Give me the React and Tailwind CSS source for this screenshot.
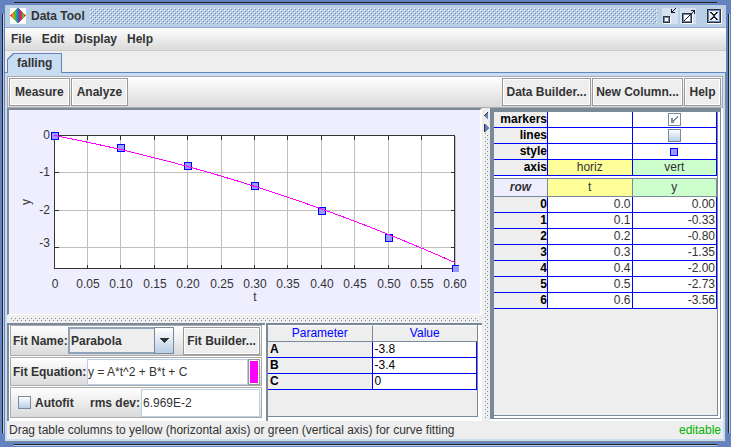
import { useState } from 'react';

const POINTS = [
  [0.0, 0.0],
  [0.1, -0.33],
  [0.2, -0.8],
  [0.3, -1.35],
  [0.4, -2.0],
  [0.5, -2.73],
  [0.6, -3.56],
];

const PARAMS = [
  ['A', '-3.8'],
  ['B', '-3.4'],
  ['C', '0'],
];

const X_TICKS = ['0', '0.05', '0.10', '0.15', '0.20', '0.25', '0.30', '0.35', '0.40', '0.45', '0.50', '0.55', '0.60'];
const Y_TICKS = [
  { label: '0', line: 25, base: 29 },
  { label: '-1', line: 62, base: 66 },
  { label: '-2', line: 100, base: 104 },
  { label: '-3', line: 137, base: 137 },
];

const tickX = (i) => Math.floor(45 + i * 33.4);
const plotX = (t) => 45 + (t / 0.6) * 401;
const plotY = (y) => 25.5 - y * 37.3;

function Bumps({ id, dark, className }) {
  return (
    <svg className={className} width="100%" height="100%" shapeRendering="crispEdges" aria-hidden="true">
      <defs>
        <pattern id={id} width="4" height="4" patternUnits="userSpaceOnUse">
          <path d="M0 0h1v1h-1zM2 2h1v1h-1z" fill="#fff" />
          <path d="M1 1h1v1h-1zM3 3h1v1h-1z" fill={dark} />
        </pattern>
      </defs>
      <rect width="100%" height="100%" fill={`url(#${id})`} />
    </svg>
  );
}

function Logo() {
  return (
    <svg width="16" height="16" viewBox="0 0 16 16" shapeRendering="crispEdges" aria-hidden="true">
      <rect width="16" height="16" fill="#fff" />
      <path d="M0 7h1v-1h1v3h-1v-1h-1z" fill="#e8452c" />
      <path d="M2 5h1v-1h1v7h-1v-1h-1z" fill="#f08a24" />
      <path d="M4 3h1v-1h1v11h-1v-1h-1z" fill="#5cb531" />
      <path d="M6 1h1v13h-1z" fill="#1f9d8b" />
      <path d="M7 0h1v15h-1z" fill="#1b8fd0" />
      <path d="M8 0h1v15h-1z" fill="#4a55b5" />
      <path d="M9 1h1v13h-1z" fill="#8a3a9c" />
      <path d="M10 2h1v11h-1z" fill="#d6246e" />
      <path d="M11 3h1v9h-1z" fill="#e8303a" />
      <path d="M12 4h1v7h-1z" fill="#4fae3c" />
      <path d="M13 5h1v5h-1z" fill="#7dbb2e" />
      <path d="M14 6h1v3h-1zM15 7h1v1h-1z" fill="#e8452c" />
    </svg>
  );
}

function MinimizeIcon() {
  return (
    <svg width="16" height="16" viewBox="0 0 16 16" shapeRendering="crispEdges" aria-hidden="true">
      <rect width="16" height="16" fill="#d3e1f0" />
      <path d="M1 8h7v7h-7z" fill="#333" />
      <path d="M2 9h5v5h-5z" fill="#6382bf" />
      <path d="M3 10h3v3h-3z" fill="#fff" />
      <path d="M8 9h1v7h-7v-1h6z" fill="#fff" />
      <path d="M9 1h1v4h-1zM10 4h3v1h-3zM10 3h1v1h-1zM11 2h1v1h-1zM12 1h1v1h-1zM13 0h1v1h-1z" fill="#111" />
    </svg>
  );
}

function MaximizeIcon() {
  return (
    <svg width="16" height="16" viewBox="0 0 16 16" shapeRendering="crispEdges" aria-hidden="true">
      <rect width="16" height="16" fill="#d3e1f0" />
      <path d="M2 5h10v10h-10z" fill="#333" />
      <path d="M3 6h8v8h-8z" fill="#6382bf" />
      <path d="M4 7h6v6h-6z" fill="#fff" />
      <path d="M12 6h1v10h-10v-1h9z" fill="#fff" />
      <path
        d="M4 12h1v1h-1zM5 11h1v1h-1zM6 10h1v1h-1zM7 9h1v1h-1zM8 8h1v1h-1zM9 7h1v1h-1zM10 6h1v1h-1zM11 5h1v1h-1zM12 4h1v1h-1zM13 3h1v1h-1zM11 2h4v1h-4zM14 3h1v3h-1z"
        fill="#222"
      />
    </svg>
  );
}

function CloseIcon() {
  return (
    <svg width="15" height="15" viewBox="0 0 15 15" shapeRendering="crispEdges" aria-hidden="true">
      <rect width="15" height="15" fill="#fff" />
      <rect width="14" height="14" fill="#333" />
      <rect x="1" y="1" width="12" height="12" fill="#6382bf" />
      <rect x="2" y="2" width="10" height="10" fill="#e4edf7" />
      <path
        d="M3 3h2v1h-2zM4 4h2v1h-2zM5 5h2v1h-2zM6 6h2v2h-2zM5 8h2v1h-2zM4 9h2v1h-2zM3 10h2v1h-2zM9 3h2v1h-2zM8 4h2v1h-2zM7 5h2v1h-2zM7 8h2v1h-2zM8 9h2v1h-2zM9 10h2v1h-2z"
        fill="#222"
      />
    </svg>
  );
}

function ToolButton({ className = '', children }) {
  return (
    <button className={`flex h-7 items-center justify-center whitespace-nowrap border border-[#999] bg-[#eee] font-bold shadow-[inset_0_0_0_1px_#fff] ${className}`}>
      {children}
    </button>
  );
}

function Marker({ x, y, last }) {
  const left = Math.floor(x) - 3;
  const top = Math.floor(y) - 3;
  return (
    <g>
      <rect x={left} y={top} width={last ? 7 : 8} height={last ? 7 : 8} fill="#0000ff" />
      <rect x={left + 1} y={top + 1} width="6" height="6" fill="#9999ff" />
    </g>
  );
}

function Chart() {
  const curve = Array.from({ length: 61 }, (_, i) => {
    const t = i / 100;
    return `${plotX(t)},${plotY(-3.8 * t * t - 3.4 * t)}`;
  }).join(' ');

  return (
    <svg className="h-full w-full" viewBox="0 0 471 204" role="img" aria-label="y versus t">
      <g shapeRendering="crispEdges">
        <rect x="45" y="25" width="402" height="134" fill="#fff" />
        {X_TICKS.map((label, i) => (
          <rect key={label} x={tickX(i)} y="25" width="1" height="133" fill="#c0c0c0" />
        ))}
        {Y_TICKS.map((tick) => (
          <rect key={tick.label} x="45" y={tick.line} width="400" height="1" fill="#c0c0c0" />
        ))}
        {X_TICKS.map((label, i) => (
          <path key={label} d={`M${tickX(i)} 25h1v5h-1zM${tickX(i)} 155h1v3h-1z`} fill="#333" />
        ))}
        {Y_TICKS.map((tick) => (
          <path key={tick.label} d={`M45 ${tick.line}h5v1h-5zM442 ${tick.line}h4v1h-4z`} fill="#333" />
        ))}
        <path d="M45 25h401v134h-401zM46 26v132h399v-132z" fillRule="evenodd" fill="#333" />
        <rect x="446" y="26" width="1" height="132" fill="#c0c0c0" />
        {POINTS.map(([t, y]) => (
          <Marker key={t} x={plotX(t)} y={plotY(y)} last={t === 0.6} />
        ))}
        <polyline points={curve} fill="none" stroke="#ff00ff" strokeWidth="1" />
      </g>
      <g fill="#333" fontSize="12">
        {X_TICKS.map((label, i) => (
          <text key={label} x={tickX(i) + 1} y="178" textAnchor="middle">
            {label}
          </text>
        ))}
        {Y_TICKS.map((tick) => (
          <text key={tick.label} x="41" y={tick.base} textAnchor="end">
            {tick.label}
          </text>
        ))}
        <text x="246" y="191" textAnchor="middle">
          t
        </text>
        <text transform="translate(21 92) rotate(-90)" textAnchor="middle">
          y
        </text>
      </g>
    </svg>
  );
}

const headCell = 'h-4 border-b border-r border-[#0000ff] bg-[#eee] p-0 text-right font-bold text-black';
const cell = 'h-4 border-b border-r border-[#0000ff] bg-white p-0';

function Cols() {
  return (
    <colgroup>
      <col className="w-[54px]" />
      <col />
      <col />
    </colgroup>
  );
}

function Check({ label, checked, onChange }) {
  return (
    <span className="relative mx-auto block size-[13px]">
      <input
        type="checkbox"
        aria-label={label}
        checked={checked}
        onChange={onChange}
        className="peer block size-[13px] appearance-none border border-[#7a8a99] bg-linear-to-b from-white to-[#b8cfe5] checked:to-white"
      />
      <svg className="pointer-events-none absolute inset-0 hidden peer-checked:block" width="13" height="13" viewBox="0 0 13 13" shapeRendering="crispEdges" aria-hidden="true">
        <path d="M3 5h2v5h-2zM5 7h1v2h-1zM6 6h1v2h-1zM7 5h1v2h-1zM8 4h1v2h-1zM9 3h1v2h-1zM5 9h1v1h-1z" fill="#7a8a99" />
      </svg>
    </span>
  );
}

function DataPane() {
  const [markers, setMarkers] = useState(true);
  const [lines, setLines] = useState(false);

  return (
    <section className="flex w-[233px] shrink-0 flex-col bg-white pb-[2px] pr-[2px]">
      <div className="flex flex-1 flex-col border-b border-l-4 border-r border-t-4 border-[#7a8a99] bg-white pb-[2px] pr-[2px]">
        <div className="flex flex-1 flex-col border-b border-r border-[#7a8a99] bg-[#eee]">
          <table className="w-full table-fixed border-separate border-spacing-0 text-center leading-[15px]">
            <Cols />
            <tbody>
              <tr>
                <th scope="row" className={headCell}>markers</th>
                <td className={cell} />
                <td className={cell}>
                  <Check label="markers" checked={markers} onChange={() => setMarkers(!markers)} />
                </td>
              </tr>
              <tr>
                <th scope="row" className={headCell}>lines</th>
                <td className={cell} />
                <td className={cell}>
                  <Check label="lines" checked={lines} onChange={() => setLines(!lines)} />
                </td>
              </tr>
              <tr>
                <th scope="row" className={headCell}>style</th>
                <td className={cell} />
                <td className={cell}>
                  <span className="mx-auto block size-2 border border-[#0000ff] bg-[#9999ff]" />
                </td>
              </tr>
              <tr>
                <th scope="row" className={headCell}>axis</th>
                <td className="h-4 border-b border-r border-[#0000ff] bg-[#ffff99] p-0">horiz</td>
                <td className="h-4 border-b border-r border-[#0000ff] bg-[#ccffcc] p-0">vert</td>
              </tr>
            </tbody>
          </table>
          <div className="h-[3px] border-b border-[#7a8a99] bg-white" />
          <table className="w-full table-fixed border-separate border-spacing-0 text-right leading-[15px]">
            <Cols />
            <thead>
              <tr className="text-center">
                <th className="h-[18px] border-b border-r border-[#7a8a99] bg-[#eeeeff] p-0 italic">row</th>
                <th className="h-[18px] border-b border-r border-[#7a8a99] bg-[#ffff99] p-0 font-normal">t</th>
                <th className="h-[18px] border-b border-r border-[#7a8a99] bg-[#ccffcc] p-0 font-normal">y</th>
              </tr>
            </thead>
            <tbody>
              {POINTS.map(([t, y], i) => (
                <tr key={i}>
                  <th scope="row" className={headCell}>{i}</th>
                  <td className="h-4 border-b border-r border-[#0000ff] bg-white p-0 pr-px">{t.toFixed(1)}</td>
                  <td className="h-4 border-b border-r border-[#0000ff] bg-white p-0 pr-px">{y.toFixed(2)}</td>
                </tr>
              ))}
            </tbody>
          </table>
        </div>
      </div>
    </section>
  );
}

const fitRow = 'flex items-center border border-[#aaa] bg-linear-to-b from-white to-[#dadada] px-px';

function FitPanel() {
  const [autofit, setAutofit] = useState(false);

  return (
    <div className="flex w-[258px] shrink-0 flex-col gap-px border-l-2 border-t-2 border-[#7a8a99] bg-white pb-[3px] pl-px pr-[3px]">
      <div className={`${fitRow} h-[31px]`}>
        <label htmlFor="fit-name" className="w-[56px] whitespace-nowrap pl-px font-bold">Fit Name:</label>
        <div className="relative h-[27px] w-[106px]">
          <select
            id="fit-name"
            className="h-full w-full appearance-none border-2 border-[#8fa3b8] bg-[#eee] pl-px font-bold"
          >
            <option>Parabola</option>
            <option>Line</option>
            <option>Cubic</option>
          </select>
          <span className="pointer-events-none absolute inset-y-0 right-0 flex w-5 items-center justify-center border border-[#7a8a99] bg-linear-to-b from-white to-[#b8cfe5]">
            <svg width="10" height="5" viewBox="0 0 10 5" shapeRendering="crispEdges" aria-hidden="true">
              <path d="M0 0h10l-5 5z" fill="#333" />
            </svg>
          </span>
        </div>
        <span className="flex-1" />
        <ToolButton className="w-[77px]">Fit Builder...</ToolButton>
      </div>
      <div className={`${fitRow} h-[29px]`}>
        <label htmlFor="fit-eq" className="w-[75px] shrink-0 whitespace-nowrap pl-px font-bold">Fit Equation:</label>
        <input
          id="fit-eq"
          defaultValue="y = A*t^2 + B*t + C"
          className="h-[26px] w-0 flex-1 border border-[#b8cfe5] bg-white"
        />
        <button aria-label="Curve color" className="h-[26px] w-[12px] border border-[#999] bg-[#ff00ff] shadow-[inset_0_0_0_1px_#fff]" />
      </div>
      <div className={`${fitRow} h-[31px]`}>
        <label className="flex w-[78px] shrink-0 items-center gap-1 pl-[6px] font-bold">
          <input
            type="checkbox"
            checked={autofit}
            onChange={() => setAutofit(!autofit)}
            className="size-[13px] appearance-none border border-[#7a8a99] bg-linear-to-b from-white to-[#b8cfe5] checked:bg-[#7a8a99]"
          />
          Autofit
        </label>
        <label htmlFor="rms" className="w-[51px] shrink-0 whitespace-nowrap font-bold">rms dev:</label>
        <input id="rms" readOnly value="6.969E-2" className="h-[28px] w-0 flex-1 border border-[#b8cfe5] bg-white pl-px" />
      </div>
    </div>
  );
}

function ParamTable() {
  return (
    <div className="ml-px flex flex-1 flex-col border-l-2 border-t-2 border-[#7a8a99] bg-white pb-1 pr-1">
      <div className="flex-1 border-b border-r border-[#7a8a99] bg-[#eee]">
        <table className="w-full table-fixed border-separate border-spacing-0 text-left leading-[15px] text-black">
          <thead>
            <tr className="text-center text-[#0000ff]">
              <th className="h-[17px] border-b border-r border-t border-[#7a8a99] border-t-white p-0 font-normal">Parameter</th>
              <th className="h-[17px] border-b border-t border-[#7a8a99] border-t-white p-0 font-normal">Value</th>
            </tr>
          </thead>
          <tbody>
            {PARAMS.map(([name, value]) => (
              <tr key={name}>
                <th scope="row" className="h-4 border-b border-r border-[#0000ff] p-0 pl-[2px] font-bold">{name}</th>
                <td className="h-4 border-b border-r border-[#0000ff] bg-white p-0 pl-[2px]">{value}</td>
              </tr>
            ))}
          </tbody>
        </table>
      </div>
    </div>
  );
}

export default function App() {
  return (
    <div className="relative flex h-screen min-h-[447px] flex-col bg-[#6382bf] p-[5px] font-['Liberation_Sans',Arial,sans-serif] text-[12px] leading-4 text-[#333]">
      {/* grooves in the window frame */}
      <span className="absolute left-3.5 right-3.5 top-[2px] h-[2px] border-t border-[#222] bg-[#6f8cc4]" />
      <span className="absolute bottom-px left-3.5 right-3.5 h-[2px] border-t border-[#222] bg-[#b8cfe5]" />
      <span className="absolute bottom-3.5 left-[2px] top-3.5 w-[2px] border-l border-[#222] bg-[#b8cfe5]" />
      <span className="absolute bottom-3.5 right-px top-3.5 w-[2px] border-l border-[#222] bg-[#b8cfe5]" />

      <div className="flex min-h-0 flex-1 flex-col bg-[#eee]">
        <header className="flex h-[23px] shrink-0 items-center border-b border-[#8fa9cf] bg-[#b8cfe5] pl-[5px] pr-1">
          <Logo />
          <h1 className="px-[5px] font-bold">Data Tool</h1>
          <div className="h-4 flex-1">
            <Bumps id="title-bumps" dark="#6382bf" />
          </div>
          <button aria-label="Minimize" className="ml-[5px]"><MinimizeIcon /></button>
          <button aria-label="Maximize" className="ml-[2px]"><MaximizeIcon /></button>
          <button aria-label="Close" className="ml-[11px]"><CloseIcon /></button>
        </header>

        <nav className="flex h-[23px] shrink-0 items-center gap-[10px] border-b border-[#ccc] bg-linear-to-b from-white to-[#dadada] pl-[6px] font-bold">
          <button className="font-bold">File</button>
          <button className="font-bold">Edit</button>
          <button className="font-bold">Display</button>
          <button className="font-bold">Help</button>
        </nav>

        <div role="tablist" className="flex h-[22px] shrink-0 items-end border-b border-[#6382bf] pl-[2px]">
          <button
            role="tab"
            aria-selected="true"
            className="-mb-px bg-[#6382bf] pl-px pr-px pt-px font-bold [clip-path:polygon(6px_0,100%_0,100%_100%,0_100%,0_6px)]"
          >
            <span className="block h-[19px] bg-[#c8ddf2] px-[9px] leading-[18px] [clip-path:polygon(6px_0,100%_0,100%_100%,0_100%,0_6px)]">
              falling
            </span>
          </button>
        </div>

        <main className="flex min-h-0 flex-1 flex-col border-b border-r border-[#7a8a99] bg-[#c8ddf2] px-[2px] pb-[2px] pt-[3px]">
          <div className="flex shrink-0 gap-px border border-[#aaa] bg-linear-to-b from-white to-[#dadada] p-px">
            <ToolButton className="px-[5px]">Measure</ToolButton>
            <ToolButton className="px-[5px]">Analyze</ToolButton>
            <span className="flex-1" />
            <ToolButton className="w-[89px]">Data Builder...</ToolButton>
            <ToolButton className="w-[91px]">New Column...</ToolButton>
            <ToolButton className="w-[37px]">Help</ToolButton>
          </div>

          <div className="flex min-h-0 flex-1">
            <div className="flex min-w-0 flex-1 flex-col">
              <div className="min-h-0 flex-1 border-b border-l-2 border-r-2 border-t-2 border-[#7a8a99] border-b-white border-r-white bg-[#eeeeff]">
                <Chart />
              </div>
              <div className="h-2 shrink-0 bg-[#eee] px-[3px] py-[2px]">
                <Bumps id="row-bumps" dark="#7a8a99" className="block" />
              </div>
              <div className="flex h-[98px] shrink-0 bg-white">
                <FitPanel />
                <ParamTable />
              </div>
            </div>
            <div className="flex w-2 shrink-0 flex-col items-center bg-[#eee] pb-[3px] pt-1">
              <svg className="shrink-0" width="6" height="20" viewBox="0 0 6 20" shapeRendering="crispEdges" aria-hidden="true">
                <path d="M5 0v8l-4-4z" fill="#6382bf" />
                <path d="M4 0h1v1h-1v1h-1v1h-1v1h-1v-1h1v-1h1v-1h1z" fill="#333" />
                <path d="M2 12v8l4-4z" fill="#6382bf" />
                <path d="M1 12h1v8h-1z" fill="#333" />
              </svg>
              <div className="min-h-0 w-1 flex-1">
                <Bumps id="col-bumps" dark="#7a8a99" className="block" />
              </div>
            </div>
            <DataPane />
          </div>

          <footer className="flex h-[18px] shrink-0 items-center justify-between bg-[#eee] px-[2px] leading-[18px]">
            <span>Drag table columns to yellow (horizontal axis) or green (vertical axis) for curve fitting</span>
            <span className="text-[#00b300]">editable</span>
          </footer>
        </main>
      </div>
    </div>
  );
}
